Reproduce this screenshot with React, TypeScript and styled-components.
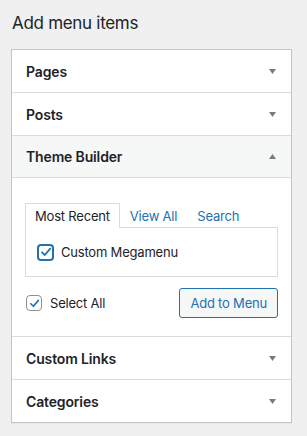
import React from "react";
import styled, { createGlobalStyle } from "styled-components";

const Global = createGlobalStyle`
  html, body { margin: 0; padding: 0; background: #f0f0f1; }
  body { font-family: Inter, "Noto Sans", Arial, sans-serif; color: #1d2327; -webkit-font-smoothing: antialiased; letter-spacing: -0.2px; }
  * { box-sizing: border-box; }
`;

const Page = styled.div`
  padding: 12px 15px 12px 11px;
`;

const Heading = styled.h2`
  margin: 0 0 15px 1px;
  font-size: 17px;
  line-height: 22px;
  font-weight: 400;
  letter-spacing: -0.3px;
  color: #1d2327;
`;

const Panel = styled.div`
  background: #fff;
  border: 1px solid #c3c4c7;
  box-shadow: 0 1px 1px rgba(0, 0, 0, 0.04);
`;

const SectionHeader = styled.div<{ $open?: boolean; $first?: boolean }>`
  display: flex;
  align-items: center;
  justify-content: space-between;
  height: ${(p) => (p.$first ? 42 : 43)}px;
  padding: 0 15px 0 14px;
  border-top: ${(p) => (p.$first ? "none" : "1px solid #dcdcde")};
  background: ${(p) => (p.$open ? "#f6f7f7" : "#fff")};
  border-bottom: ${(p) => (p.$open ? "1px solid #dcdcde" : "none")};
  font-size: 14px;
  font-weight: 600;
  letter-spacing: -0.15px;
  color: #1d2327;
`;

const Arrow = styled.svg`
  width: 7px;
  height: 5px;
  display: block;
`;

const Content = styled.div`
  padding: 25px 13px 18px 13px;
`;

const Tabs = styled.div`
  display: flex;
  align-items: stretch;
  height: 24px;
  font-size: 13px;
`;

const Tab = styled.div<{ $active?: boolean }>`
  display: flex;
  align-items: center;
  padding: 0 9px 0 9px;
  position: relative;
  z-index: 1;
  margin-bottom: -1px;
  height: 25px;
  color: ${(p) => (p.$active ? "#1d2327" : "#2271b1")};
  background: ${(p) => (p.$active ? "#fff" : "transparent")};
  border: 1px solid ${(p) => (p.$active ? "#dcdcde" : "transparent")};
  border-bottom: none;
`;

const TabBox = styled.div`
  height: 50px;
  border: 1px solid #dcdcde;
  display: flex;
  align-items: center;
  padding: 0 11px;
  gap: 7px;
  font-size: 13px;
`;

const CheckBox = styled.span<{ $focus?: boolean }>`
  width: ${(p) => (p.$focus ? 17 : 16)}px;
  height: ${(p) => (p.$focus ? 17 : 16)}px;
  border-radius: 4px;
  border: ${(p) => (p.$focus ? "2px solid #2271b1" : "1px solid #8c8f94")};
  background: #fff;
  display: flex;
  align-items: center;
  justify-content: center;
  flex: none;
`;

const Actions = styled.div`
  margin-top: 11px;
  display: flex;
  align-items: center;
  justify-content: space-between;
`;

const SelectAll = styled.label`
  display: flex;
  align-items: center;
  gap: 8px;
  font-size: 13px;
  padding-left: 1px;
`;

const Button = styled.button`
  height: 30px;
  padding: 0 10px;
  border: 1px solid #2271b1;
  border-radius: 3px;
  background: #f6f7f7;
  color: #2271b1;
  font-family: inherit;
  letter-spacing: inherit;
  font-size: 13px;
  line-height: 28px;
`;

const Check = ({ size = 12 }: { size?: number }) => (
  <svg width={size} height={size} viewBox="0 0 12 12">
    <path d="M2 6.3 L4.8 9 L10.2 2.6" fill="none" stroke="#2271b1" strokeWidth="1.8" strokeLinecap="round" strokeLinejoin="round" />
  </svg>
);

const Down = () => (
  <Arrow viewBox="0 0 7 5">
    <polygon points="0,0 7,0 3.5,5" fill="#787c82" />
  </Arrow>
);
const Up = () => (
  <Arrow viewBox="0 0 7 5">
    <polygon points="0,5 7,5 3.5,0" fill="#787c82" />
  </Arrow>
);

export default function App() {
  return (
    <Page>
      <Global />
      <Heading>Add menu items</Heading>
      <Panel>
        <SectionHeader $first>
          <span>Pages</span>
          <Down />
        </SectionHeader>
        <SectionHeader>
          <span>Posts</span>
          <Down />
        </SectionHeader>
        <SectionHeader $open>
          <span>Theme Builder</span>
          <Up />
        </SectionHeader>
        <Content>
          <Tabs>
            <Tab $active>Most Recent</Tab>
            <Tab>View All</Tab>
            <Tab>Search</Tab>
          </Tabs>
          <TabBox>
            <CheckBox $focus>
              <Check size={12} />
            </CheckBox>
            <span>Custom Megamenu</span>
          </TabBox>
          <Actions>
            <SelectAll>
              <CheckBox>
                <Check size={11} />
              </CheckBox>
              <span>Select All</span>
            </SelectAll>
            <Button>Add to Menu</Button>
          </Actions>
        </Content>
        <SectionHeader>
          <span>Custom Links</span>
          <Down />
        </SectionHeader>
        <SectionHeader>
          <span>Categories</span>
          <Down />
        </SectionHeader>
      </Panel>
    </Page>
  );
}
